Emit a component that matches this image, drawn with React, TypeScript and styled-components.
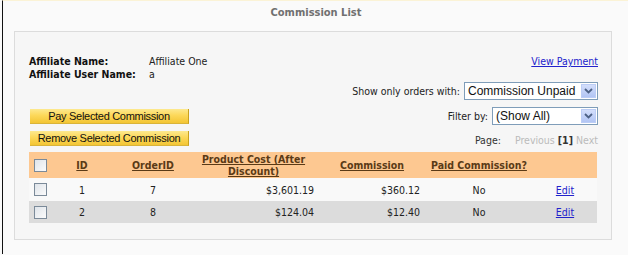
import React from "react";
import styled, { createGlobalStyle } from "styled-components";

const Global = createGlobalStyle`
  html, body { margin: 0; padding: 0; background: #fafafa; }
  body { font-family: "DejaVu Sans Condensed", "DejaVu Sans", Tahoma, sans-serif; font-stretch: condensed; font-size: 10.5px; color: #222; }
`;

const Page = styled.div`
  margin-left: 2px;
  border-left: 1px solid #111;
  border-top: 1px solid #fbf3d6;
  height: 254px;
  box-sizing: border-box;
  padding: 0 13px 0 11px;
  display: flex;
  flex-direction: column;
`;

const Title = styled.h1`
  margin: 0;
  padding-top: 5px;
  height: 30px;
  box-sizing: border-box;
  text-align: center;
  font-size: 11px;
  font-weight: bold;
  color: #707070;
  padding-left: 3px;
`;

const Panel = styled.div`
  border: 1px solid #dcdcdc;
  background: #f6f6f6;
  padding: 23px 13px 16px 14px;
  display: flex;
  flex-direction: column;
  width: 598px;
  box-sizing: border-box;
`;

const TopRow = styled.div`
  display: flex;
  justify-content: space-between;
  align-items: flex-start;
`;

const InfoGrid = styled.div`
  display: grid;
  grid-template-columns: 120px auto;
  row-gap: 1px;
  line-height: 12px;
`;

const Label = styled.span`
  font-weight: bold;
  color: #111;
`;

const Value = styled.span`
  color: #222;
`;

const Link = styled.a`
  color: #2222cc;
  text-decoration: underline;
  cursor: pointer;
`;

const Controls = styled.div`
  display: flex;
  justify-content: space-between;
  align-items: flex-end;
  margin-top: 2px;
`;

const ButtonStack = styled.div`
  display: flex;
  flex-direction: column;
  gap: 7px;
  padding-left: 1px;
`;

const GoldButton = styled.button`
  width: 159px;
  height: 15px;
  padding: 0;
  border: none;
  border-right: 1px solid #c9a21e;
  border-bottom: 1px solid #d9b43a;
  background: linear-gradient(#fde98f 0%, #fcd85a 45%, #f3c534 100%);
  font-family: "Liberation Sans", Arial, sans-serif;
  font-size: 11px;
  letter-spacing: -0.3px;
  line-height: 14px;
  white-space: nowrap;
  color: #111;
  text-align: center;
`;

const FilterStack = styled.div`
  display: flex;
  flex-direction: column;
  align-items: flex-end;
`;

const FilterRow = styled.div<{ $mt?: number }>`
  display: flex;
  align-items: center;
  gap: 4px;
  margin-top: ${(p) => p.$mt ?? 0}px;
  color: #222;
`;

const SelectBox = styled.div<{ $w: number }>`
  width: ${(p) => p.$w}px;
  height: 18px;
  box-sizing: border-box;
  border: 1px solid #7f9db9;
  background: #fff;
  display: flex;
  align-items: center;
  justify-content: space-between;
  padding-left: 3px;
  font-family: "Liberation Sans", Arial, sans-serif;
  font-size: 12px;
  color: #111;
`;

const Arrow = styled.span`
  width: 15px;
  height: 14px;
  margin-right: 1px;
  background: linear-gradient(#d3defb, #b2c5f4);
  border: 1px solid #bccdf6;
  box-sizing: border-box;
  display: flex;
  align-items: center;
  justify-content: center;
`;

const Pager = styled.div`
  display: flex;
  gap: 14px;
  margin-top: 9px;
  line-height: 12px;
  color: #333;
`;

const Muted = styled.span`
  color: #bbb;
`;

const Strong = styled.b`
  color: #333;
`;

const Table = styled.table`
  margin-top: 6px;
  width: 568px;
  border-collapse: collapse;
  table-layout: fixed;
`;

const HeadRow = styled.tr`
  background: #fdc891;
  height: 26px;
`;

const Th = styled.th<{ $align?: string; $pr?: number }>`
  padding: 0 ${(p) => p.$pr ?? 0}px 0 0;
  font-weight: bold;
  line-height: 12px;
  text-align: ${(p) => p.$align ?? "center"};
`;

const HeadLink = styled.a`
  color: #5a3a16;
  text-decoration: underline;
`;

const Row = styled.tr<{ $alt?: boolean; $h: number }>`
  background: ${(p) => (p.$alt ? "#dcdcdc" : "#f9f9f9")};
  height: ${(p) => p.$h}px;
`;

const Td = styled.td<{ $align?: string; $pr?: number }>`
  padding: 0 ${(p) => p.$pr ?? 0}px 0 0;
  text-align: ${(p) => p.$align ?? "center"};
  color: #222;
`;

const Check = styled.span`
  display: inline-block;
  width: 13px;
  height: 13px;
  box-sizing: border-box;
  border: 1px solid #7b8a99;
  background: linear-gradient(135deg, #dfe4ea, #fbfbfb);
  vertical-align: middle;
  margin-left: 5px;
`;

const ArrowIcon = () => (
  <svg width="9" height="6" viewBox="0 0 9 6">
    <path d="M1 1 L4.5 4.5 L8 1" fill="none" stroke="#4d6185" strokeWidth="1.8" />
  </svg>
);

const rows = [
  { id: 1, order: 7, cost: "$3,601.19", com: "$360.12", paid: "No" },
  { id: 2, order: 8, cost: "$124.04", com: "$12.40", paid: "No" },
];

export default function App() {
  return (
    <>
      <Global />
      <Page>
        <Title>Commission List</Title>
        <Panel>
          <TopRow>
            <InfoGrid>
              <Label>Affiliate Name:</Label>
              <Value>Affiliate One</Value>
              <Label>Affiliate User Name:</Label>
              <Value>a</Value>
            </InfoGrid>
            <Link>View Payment</Link>
          </TopRow>
          <Controls>
            <ButtonStack>
              <GoldButton>Pay Selected Commission</GoldButton>
              <GoldButton>Remove Selected Commission</GoldButton>
            </ButtonStack>
            <FilterStack>
              <FilterRow>
                <span>Show only orders with:</span>
                <SelectBox $w={134}>
                  Commission Unpaid
                  <Arrow><ArrowIcon /></Arrow>
                </SelectBox>
              </FilterRow>
              <FilterRow $mt={7}>
                <span>Filter by:</span>
                <SelectBox $w={106}>
                  (Show All)
                  <Arrow><ArrowIcon /></Arrow>
                </SelectBox>
              </FilterRow>
              <Pager>
                <span>Page:</span>
                <span>
                  <Muted>Previous</Muted> <Strong>[1]</Strong> <Muted>Next</Muted>
                </span>
              </Pager>
            </FilterStack>
          </Controls>
          <Table>
            <colgroup>
              <col style={{ width: 30 }} />
              <col style={{ width: 46 }} />
              <col style={{ width: 96 }} />
              <col style={{ width: 118 }} />
              <col style={{ width: 106 }} />
              <col style={{ width: 108 }} />
              <col style={{ width: 64 }} />
            </colgroup>
            <thead>
              <HeadRow>
                <Th $align="left"><Check /></Th>
                <Th><HeadLink>ID</HeadLink></Th>
                <Th><HeadLink>OrderID</HeadLink></Th>
                <Th $pr={13}><HeadLink>Product Cost (After Discount)</HeadLink></Th>
                <Th><HeadLink>Commission</HeadLink></Th>
                <Th><HeadLink>Paid Commission?</HeadLink></Th>
                <Th />
              </HeadRow>
            </thead>
            <tbody>
              {rows.map((r, i) => (
                <Row key={r.id} $alt={i % 2 === 1} $h={i === 0 ? 23 : 22}>
                  <Td $align="left"><Check /></Td>
                  <Td>{r.id}</Td>
                  <Td>{r.order}</Td>
                  <Td $align="right" $pr={5}>{r.cost}</Td>
                  <Td $align="right" $pr={5}>{r.com}</Td>
                  <Td>{r.paid}</Td>
                  <Td><Link>Edit</Link></Td>
                </Row>
              ))}
            </tbody>
          </Table>
        </Panel>
      </Page>
    </>
  );
}
